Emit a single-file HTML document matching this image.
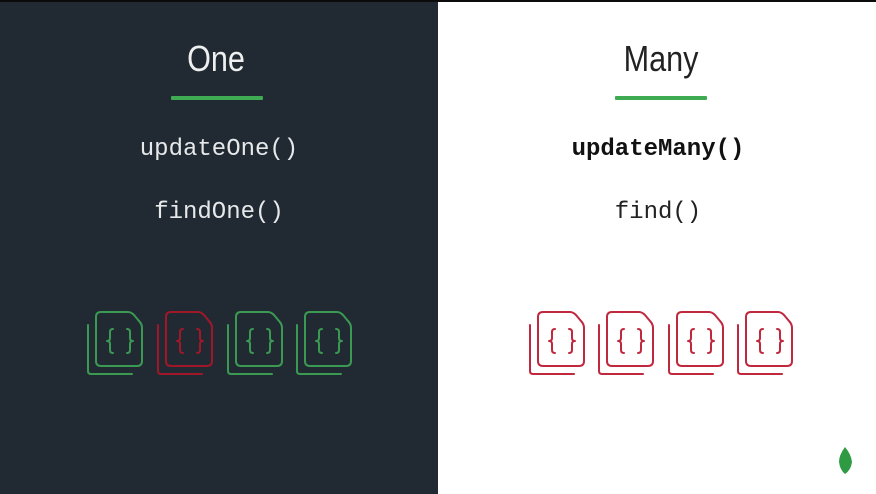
<!DOCTYPE html>
<html><head><style>
html,body{margin:0;padding:0}
body{width:876px;height:494px;position:relative;overflow:hidden;background:#fff;font-family:"Liberation Sans",sans-serif}
.left{position:absolute;left:0;top:0;width:438px;height:494px;background:#212a32}
.topbar{position:absolute;left:0;top:0;width:876px;height:2px;background:#0b0b0b}
.t{position:absolute;text-align:center;width:300px}
.title{font-size:36px;top:38px;transform:scaleX(0.85);}
.ul{position:absolute;height:4px;width:92px;background:#3eaa52;top:96px;border-radius:1px}
.code{font-family:"Liberation Mono",monospace;font-size:24px}
</style></head><body>
<div class="left"></div>
<div class="topbar"></div>
<div class="t title" style="left:66px;color:#eef0f0">One</div>
<div class="t title" style="left:511px;color:#222">Many</div>
<div class="ul" style="left:171px"></div>
<div class="ul" style="left:615px"></div>
<div class="t code" style="left:69px;top:136px;color:#e6e8ea">updateOne()</div>
<div class="t code" style="left:69px;top:199px;color:#e6e8ea">findOne()</div>
<div class="t code" style="left:508px;top:136px;color:#111;font-weight:bold">updateMany()</div>
<div class="t code" style="left:508px;top:199px;color:#222">find()</div>
<svg width="876" height="494" style="position:absolute;left:0;top:0" fill="none" stroke-width="2" stroke-linecap="round" stroke-linejoin="round">
<defs>
<g id="doc">
<path d="M5 0 H32 Q35 0 38 3 L43 9 Q46 12 46 16 V49 Q46 54 41 54 H5 Q0 54 0 49 V5 Q0 0 5 0 Z"/>
<path d="M-8 13 V59 Q-8 62 -5 62 H36"/>
<path d="M17 17 Q14 17 14 20 V26 Q14 29 11 29 Q14 29 14 32 V38 Q14 41 17 41"/>
<path d="M31 17 Q34 17 34 20 V26 Q34 29 37 29 Q34 29 34 32 V38 Q34 41 31 41"/>
</g>
</defs>
<use href="#doc" x="96" y="312" stroke="#3a9a52"/>
<use href="#doc" x="166" y="312" stroke="#a0172a"/>
<use href="#doc" x="236" y="312" stroke="#3a9a52"/>
<use href="#doc" x="305" y="312" stroke="#3a9a52"/>
<use href="#doc" x="538" y="312" stroke="#c0283e"/>
<use href="#doc" x="607" y="312" stroke="#c0283e"/>
<use href="#doc" x="677" y="312" stroke="#c0283e"/>
<use href="#doc" x="746" y="312" stroke="#c0283e"/>
<path d="M845 447 Q839 455 839 462 Q840 470 845 474 Q851 470 852 462 Q851 454 845 447 Z" fill="#2f9a44" stroke="none"/>
</svg>
</body></html>
